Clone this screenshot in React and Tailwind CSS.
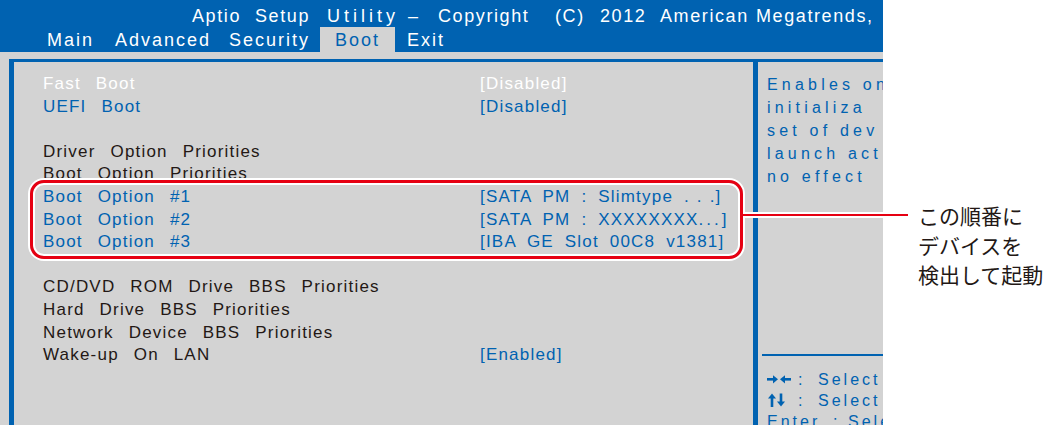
const BLUE = "text-[#0062b1]"

function Row({ label, value, tone, valueTone }) {
  const color =
    tone === "white" ? "text-white" : tone === "blue" ? "text-[#0062b1]" : "text-[#231815]"
  const vColor = valueTone === "blue" ? "text-[#0062b1]" : ""
  return (
    <div className={`grid grid-cols-[437px_1fr] h-[22.6px] whitespace-nowrap ${color}`}>
      <span>{label}</span>
      <span className={`[word-spacing:5px] ${vColor}`}>{value}</span>
    </div>
  )
}

function ArrowsLR() {
  return (
    <svg width="24" height="14" viewBox="0 0 24 14" className="inline-block align-[-1px]">
      <rect x="0" y="6" width="7" height="2.6" fill="#0062b1" />
      <polygon points="6,3.2 11,7.3 6,11.4" fill="#0062b1" />
      <polygon points="18,3.2 13,7.3 18,11.4" fill="#0062b1" />
      <rect x="17" y="6" width="7" height="2.6" fill="#0062b1" />
    </svg>
  )
}

function ArrowsUD() {
  return (
    <svg width="24" height="14" viewBox="0 0 24 14" className="inline-block align-[-1px]">
      <polygon points="1,5.5 5,0.5 9,5.5" fill="#0062b1" />
      <rect x="3.7" y="5" width="2.6" height="9" fill="#0062b1" />
      <rect x="12.7" y="0.5" width="2.6" height="9" fill="#0062b1" />
      <polygon points="10,8.5 14,13.5 18,8.5" fill="#0062b1" />
    </svg>
  )
}

export default function App() {
  return (
    <div className="relative flex w-[1050px] h-[430px] bg-white overflow-hidden font-['Liberation_Sans',Arial,sans-serif]">
      {/* BIOS screen */}
      <div className="flex flex-col w-[883px] h-[425px] shrink-0 bg-[#d3d3d3] overflow-hidden">
        {/* Header */}
        <div className="h-[52px] bg-[#0062b1] text-white text-[18px] shrink-0">
          <div className="flex h-[27px] pt-[5px] leading-[22px] pl-[192px] whitespace-nowrap tracking-[1.6px]">
            <span className="w-[63px] shrink-0">Aptio</span>
            <span className="w-[72px] shrink-0">Setup</span>
            <span className="w-[81px] shrink-0 tracking-[4px]">Utility</span>
            <span className="w-[30px] shrink-0">–</span>
            <span className="w-[117px] shrink-0">Copyright</span>
            <span className="w-[45px] shrink-0">(C)</span>
            <span className="w-[60px] shrink-0">2012</span>
            <span className="w-[96px] shrink-0">American</span>
            <span className="shrink-0">Megatrends,</span>
          </div>
          <div className="flex h-[25px] leading-[25px] pt-[1px] pl-[47px] whitespace-nowrap tracking-[2px]">
            <span className="w-[68px] shrink-0">Main</span>
            <span className="w-[114px] shrink-0">Advanced</span>
            <span className="w-[91px] shrink-0">Security</span>
            <span className="w-[75px] shrink-0 -mt-[1px] pt-[1px] pl-[15px] bg-[#d3d3d3] text-[#0062b1]">Boot</span>
            <span className="shrink-0 pl-[12px]">Exit</span>
          </div>
        </div>

        {/* Body */}
        <div className="flex-1 pt-[7px] pl-[9px]">
          <div className="flex h-full border-t-[3px] border-l-[5px] border-[#0062b1]">
            {/* Left column */}
            <div className="w-[739px] shrink-0 pl-[29px] pt-[11px] text-[17px] leading-[22.6px] tracking-[1.2px] [word-spacing:9px]">
              <Row label="Fast Boot" value="[Disabled]" tone="white" />
              <Row label="UEFI Boot" value="[Disabled]" tone="blue" />
              <div className="h-[22.6px]" />
              <Row label="Driver Option Priorities" />
              <Row label="Boot Option Priorities" />
              <Row
                label="Boot Option #1"
                value={<>[SATA PM : Slimtype <span className="[word-spacing:1px]">. . .</span>]</>}
                tone="blue"
              />
              <Row
                label="Boot Option #2"
                value={<>[SATA PM : XXXXXXXX<span className="tracking-[3px]">...</span>]</>}
                tone="blue"
              />
              <Row label="Boot Option #3" value="[IBA GE Slot 00C8 v1381]" tone="blue" />
              <div className="h-[22.6px]" />
              <Row label="CD/DVD ROM Drive BBS Priorities" />
              <Row label="Hard Drive BBS Priorities" />
              <Row label="Network Device BBS Priorities" />
              <Row label="Wake-up On LAN" value="[Enabled]" valueTone="blue" />
            </div>

            {/* Separator */}
            <div className="w-[5px] shrink-0 bg-[#0062b1]" />

            {/* Right help panel */}
            <div className={`flex-1 flex flex-col overflow-hidden whitespace-nowrap ${BLUE}`}>
              <div className="h-[292px] shrink-0 pl-[9px] pt-[10.5px] text-[16px] leading-[23px] tracking-[4.2px]">
                <div>Enables on</div>
                <div>initializa</div>
                <div>set of dev</div>
                <div>launch act</div>
                <div>no effect</div>
              </div>
              <div className="ml-[4px] border-t-2 border-[#0062b1] pl-[5px] pt-[12.5px] text-[16px] leading-[21px] tracking-[3px]">
                <div className="flex">
                  <span className="w-[31px] shrink-0"><ArrowsLR /></span>
                  <span className="w-[20px] shrink-0">:</span>
                  <span className="shrink-0">Select</span>
                </div>
                <div className="flex">
                  <span className="w-[31px] shrink-0"><ArrowsUD /></span>
                  <span className="w-[20px] shrink-0">:</span>
                  <span className="shrink-0">Select</span>
                </div>
                <div className="flex">
                  <span className="w-[66px] shrink-0">Enter</span>
                  <span className="w-[15px] shrink-0">:</span>
                  <span className="shrink-0">Sele</span>
                </div>
              </div>
            </div>
          </div>
        </div>
      </div>

      {/* Callout text */}
      <div className="pl-[35px] pt-[201px] text-[21px] leading-[29.5px] text-[#231815] font-['Noto_Sans_CJK_JP',sans-serif] whitespace-nowrap">
        <div>この順番に</div>
        <div>デバイスを</div>
        <div>検出して起動</div>
      </div>

      {/* Red highlight frame */}
      <div className="absolute left-[30px] top-[180px] w-[713px] h-[79px] rounded-[14px] border-[3px] border-[#e60012] shadow-[0_0_0_2px_#ffffff,inset_0_0_0_2px_#ffffff]" />
      {/* Leader line */}
      <div className="absolute left-[743px] top-[212px] w-[165px] h-[6px] border-y-2 border-white bg-[#e60012] box-border" />
    </div>
  )
}
